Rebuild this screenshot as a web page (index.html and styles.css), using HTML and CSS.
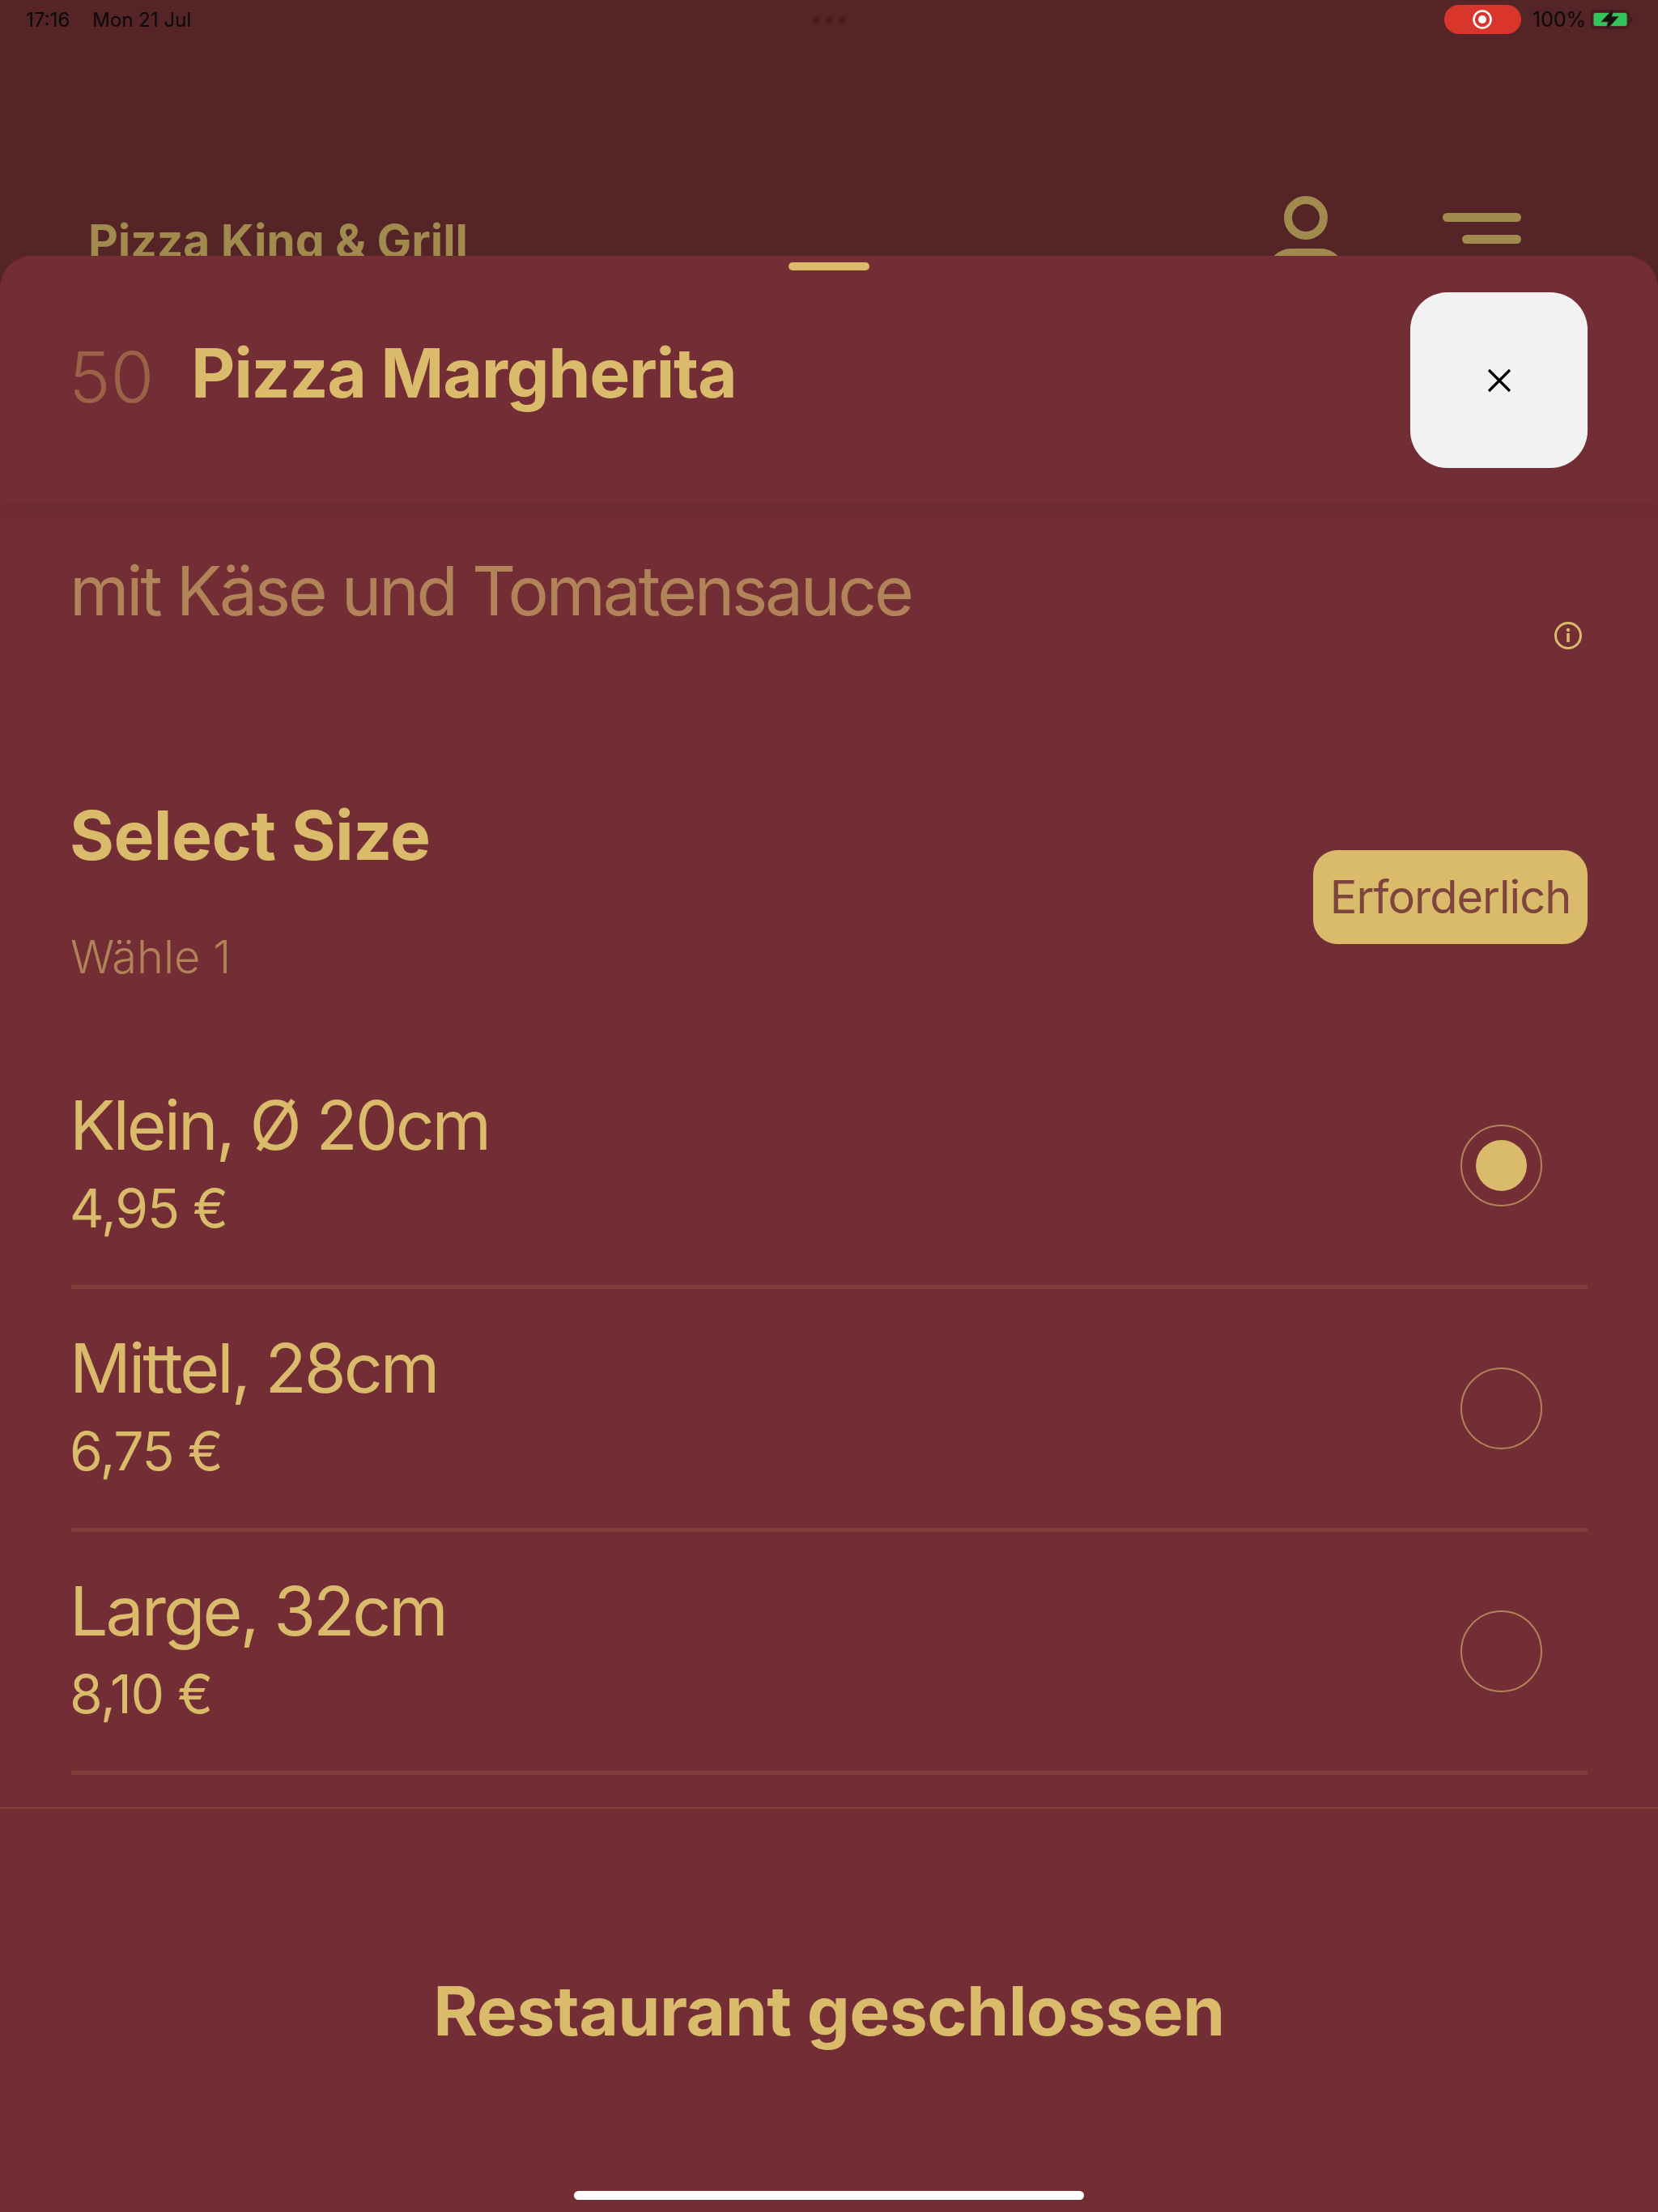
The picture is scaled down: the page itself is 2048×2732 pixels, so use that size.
FILE: index.html
```html
<!DOCTYPE html>
<html lang="de">
<head>
<meta charset="utf-8">
<title>Pizza Margherita</title>
<link rel="stylesheet" href="styles.css">
</head>
<body>
<div class="screen">
  <div class="statusbar">
    <div class="status-left"><span>17:16</span><span>Mon 21 Jul</span></div>
    <div class="status-dots"><i></i><i></i><i></i></div>
    <div class="status-right">
      <div class="rec"><svg width="26" height="26" viewBox="0 0 26 26"><circle cx="13" cy="13" r="10.5" fill="none" stroke="#fff" stroke-width="2.6"/><circle cx="13" cy="13" r="5" fill="#fff"/></svg></div>
      <span class="pct">100%</span>
      <svg class="battery" width="52" height="24" viewBox="0 0 52 24">
        <rect x="1" y="1.500" width="46" height="21" rx="5" fill="none" stroke="#3f1a1d" stroke-width="2"/>
        <rect x="3.500" y="4" width="41" height="16" rx="2.500" fill="#35c45c"/>
        <path d="M49 9c2 .5 3 2 3 3.500s-1 3-3 3.500z" fill="#3f1a1d"/>
        <path d="M27 1 15 14h7.500L20 23l12-13.500h-7.500z" fill="#111" stroke="#3f1a1d" stroke-width="2.500" paint-order="stroke"/>
      </svg>
    </div>
  </div>
  <header class="topbar">
    <h1 class="brand">Pizza King &amp; Grill</h1>
    <div class="top-actions">
      <svg class="user" width="96" height="86" viewBox="0 0 96 86"><circle cx="48" cy="27" r="22" fill="none" stroke="#a08a4e" stroke-width="10"/><rect x="0" y="65" width="96" height="60" rx="30" fill="#a08a4e"/></svg>
      <div class="menu"><i></i><i class="short"></i></div>
    </div>
  </header>

  <section class="sheet">
    <div class="handle"></div>
    <div class="sheet-head">
      <div class="title"><span class="num">50</span><span class="name">Pizza Margherita</span></div>
      <button class="close"><svg width="30" height="30" viewBox="0 0 30 30"><path d="M2 2 28 28M28 2 2 28" stroke="#000" stroke-width="3.200" fill="none"/></svg></button>
    </div>
    <div class="body">
      <div class="desc-row">
        <p class="desc">mit Käse und Tomatensauce</p>
        <svg class="info" width="36" height="36" viewBox="0 0 36 36"><circle cx="18" cy="18" r="15.500" fill="none" stroke="#d9bb6b" stroke-width="3"/><circle cx="18" cy="11" r="2.200" fill="#d9bb6b"/><rect x="16.200" y="15" width="3.600" height="11" fill="#d9bb6b"/></svg>
      </div>
      <div class="group-head">
        <div><h2 class="group-title">Select Size</h2><div class="group-sub">Wähle 1</div></div>
        <span class="badge">Erforderlich</span>
      </div>
      <div class="option"><div class="opt-text"><div class="opt-name">Klein, Ø 20cm</div><div class="opt-price">4,95 €</div></div><span class="radio on"></span></div>
      <div class="option"><div class="opt-text"><div class="opt-name">Mittel, 28cm</div><div class="opt-price">6,75 €</div></div><span class="radio"></span></div>
      <div class="option"><div class="opt-text"><div class="opt-name">Large, 32cm</div><div class="opt-price">8,10 €</div></div><span class="radio"></span></div>
    </div>
    <footer class="foot">Restaurant geschlossen</footer>
    <div class="home"></div>
  </section>
</div>
</body>
</html>
```
FILE: styles.css
```css
* { box-sizing: border-box; }
html, body { margin: 0; padding: 0; }
body { width: 2048px; height: 2732px; overflow: hidden; background: #552427; font-family: Inter, "Liberation Sans", sans-serif; }
.screen { position: relative; width: 2048px; height: 2732px; overflow: hidden; }

.statusbar { position: relative; display: flex; justify-content: space-between; align-items: center; height: 48px; padding: 0 31px 0 32px; color: #0a0a0a; font-size: 24px; }
.status-left { display: flex; gap: 28px; }
.status-dots { position: absolute; left: 1004px; top: 20px; display: flex; gap: 7px; }
.status-dots i { width: 9px; height: 9px; border-radius: 50%; background: #4a1a1e; }
.status-right { display: flex; align-items: center; }
.rec { width: 95px; height: 36px; border-radius: 18px; background: #d9352b; display: flex; align-items: center; justify-content: center; }
.pct { margin-left: 14px; font-size: 25px; }
.battery { margin-left: 6px; }

.topbar { display: flex; justify-content: space-between; padding: 194px 169px 0 109px; }
.brand { margin: 22px 0 0; font-size: 57px; font-weight: 700; line-height: 68px; letter-spacing: -0.100px; color: #a08a4e; }
.top-actions { display: flex; gap: 121px; }
.menu { display: flex; flex-direction: column; align-items: flex-end; gap: 16px; width: 97px; margin-top: 21px; }
.menu i { display: block; width: 97px; height: 11px; border-radius: 6px; background: #a08a4e; }
.menu i.short { width: 73px; }

.sheet { position: absolute; left: 0; right: 0; top: 316px; bottom: 0; background: #722e34; border-radius: 40px 40px 0 0; display: flex; flex-direction: column; overflow: hidden; }
.handle { position: absolute; z-index: 2; left: 974px; top: 8px; width: 100px; height: 10px; border-radius: 5px; background: #d9bb6b; }
.sheet-head { flex: none; height: 306px; padding: 45px 87px 0 88px; display: flex; justify-content: space-between; box-shadow: 0 10px 30px rgba(60,20,25,.12); position: relative; background: #722e34; }
.title { display: flex; align-items: flex-start; height: 200px; padding-top: 50px; line-height: 100px; }
.num { font-size: 87px; font-weight: 300; color: #9a6247; width: 151px; margin: 5px 0 0 -3px; }
.name { font-size: 84px; font-weight: 700; letter-spacing: -1.300px; color: #d9bb6b; }
.close { width: 219px; height: 217px; border: 0; border-radius: 46px; background: #f2f2f2; display: flex; align-items: center; justify-content: center; padding: 0; }

.body { flex: none; height: 1612px; padding: 0 87px 0 88px; border-bottom: 2px solid #80403c; }
.desc-row { position: relative; height: 300px; }
.desc { margin: 0 0 0 -2px; padding-top: 64px; font-size: 84px; line-height: 88px; font-weight: 400; letter-spacing: -3.300px; color: #b08458; }
.info { position: absolute; right: 6px; top: 145px; }
.group-head { display: flex; justify-content: space-between; align-items: flex-start; height: 370px; padding-top: 65px; }
.group-title { margin: 0 0 0 -2px; font-size: 84px; font-weight: 700; line-height: 90px; letter-spacing: -0.600px; color: #d9bb6b; }
.group-sub { margin: 71px 0 0 -1px; font-size: 56px; line-height: 68px; font-weight: 300; color: #b08458; }
.badge { width: 339px; height: 116px; margin-top: 63px; border-radius: 30px; background: #d9bb6b; color: #7f443e; font-size: 56px; font-weight: 400; letter-spacing: -1px; display: flex; align-items: center; justify-content: center; }
.option { display: flex; justify-content: space-between; align-items: center; height: 300px; border-bottom: 5px solid #803f3a; padding-right: 56px; }
.opt-text { margin: 0 0 8px -2px; }
.opt-name { font-size: 84px; font-weight: 400; line-height: 100px; letter-spacing: -3px; color: #d9bb6b; }
.opt-price { font-size: 66px; font-weight: 400; line-height: 80px; letter-spacing: -1.300px; color: #d9bb6b; margin-top: 12px; }
.radio { width: 101px; height: 101px; border-radius: 50%; border: 2px solid #b08458; display: flex; align-items: center; justify-content: center; }
.radio.on::after { content: ""; width: 63px; height: 63px; border-radius: 50%; background: #d9bb6b; }
.foot { flex: 1; display: flex; align-items: center; justify-content: center; font-size: 84px; font-weight: 700; letter-spacing: -0.600px; color: #d9bb6b; }
.home { position: absolute; left: 709px; top: 2390px; width: 630px; height: 11px; border-radius: 6px; background: #fff; }
```
